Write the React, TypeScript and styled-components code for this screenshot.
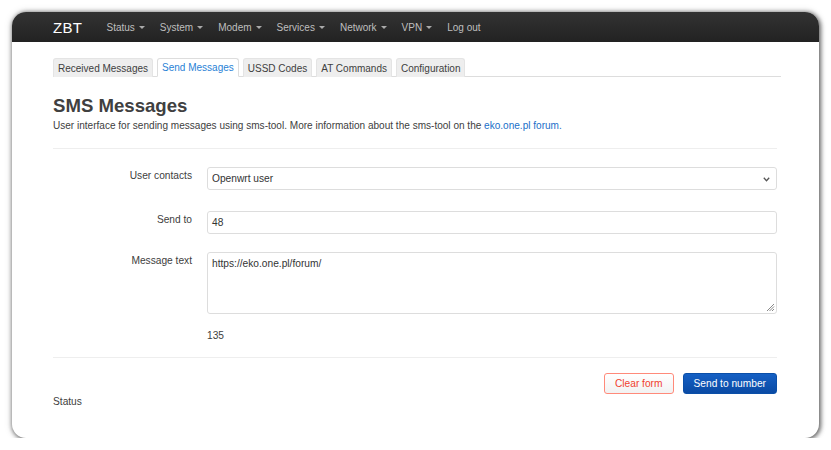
import React from "react";
import styled, { createGlobalStyle } from "styled-components";

const Global = createGlobalStyle`
  html, body { margin: 0; padding: 0; background: #fff; }
  body { font-family: "Liberation Sans", Arial, sans-serif; font-size: 10px; color: #404040; }
  * { box-sizing: border-box; }
`;

const Win = styled.div`
  margin: 12px 0 0 12px;
  width: 807px;
  height: 426px;
  border-radius: 14px;
  overflow: hidden;
  background: #fff;
  box-shadow: 1px 1px 4px 1px rgba(0, 0, 0, 0.55), 0 0 8px rgba(0, 0, 0, 0.15);
`;

const NavBar = styled.div`
  height: 30px;
  background: linear-gradient(#333, #222);
  display: flex;
  align-items: center;
  padding-left: 41px;
`;

const Brand = styled.div`
  color: #fff;
  font-size: 15px;
  width: 46px;
  letter-spacing: 0.3px;
`;

const NavItem = styled.div`
  color: #bfbfbf;
  font-size: 10px;
  padding: 0 7.5px;
  display: flex;
  align-items: center;
  gap: 3px;
`;

const Caret = styled.span`
  display: inline-block;
  width: 0;
  height: 0;
  border-left: 3px solid transparent;
  border-right: 3px solid transparent;
  border-top: 3px solid #aaa;
  margin-left: 1px;
  margin-top: 1px;
`;

const Main = styled.div`
  padding: 16px 42px 0 41px;
`;

const Tabs = styled.div`
  display: flex;
  gap: 3px;
  border-bottom: 1px solid #ddd;
  height: 19px;
  margin-right: -4px;
`;

const Tab = styled.div<{ $active?: boolean }>`
  height: 19px;
  padding: 0 4px;
  display: flex;
  align-items: center;
  font-size: 10px;
  border: 1px solid ${(p) => (p.$active ? "#ddd" : "#e4e4e4")};
  border-bottom: ${(p) => (p.$active ? "1px solid #fff" : "none")};
  border-radius: 3px 3px 0 0;
  background: ${(p) => (p.$active ? "#fff" : "#eee")};
  color: ${(p) => (p.$active ? "#2a82d6" : "#404040")};
  margin-right: 1px;
`;

const Title = styled.h2`
  margin: 18px 0 0 0;
  font-size: 18.6px;
  font-weight: 700;
  color: #404040;
  line-height: 22px;
`;

const Desc = styled.p`
  margin: 2px 0 0 0;
  font-size: 10.05px;
  line-height: 14px;
  color: #404040;
`;

const Link = styled.a`
  color: #1a6fc9;
  text-decoration: none;
`;

const Rule = styled.hr<{ $top?: number }>`
  border: none;
  border-top: 1px solid #eee;
  margin: ${(p) => p.$top ?? 0}px 0 0 0;
`;

const Form = styled.div`
  padding-top: 18px;
  display: flex;
  flex-direction: column;
`;

const Row = styled.div<{ $gap?: number }>`
  display: grid;
  grid-template-columns: 139px 1fr;
  column-gap: 15px;
  margin-bottom: ${(p) => p.$gap ?? 21}px;
`;

const Label = styled.div`
  text-align: right;
  padding-top: 3px;
  font-size: 10.2px;
  color: #404040;
`;

const Field = styled.div`
  height: 23px;
  border: 1px solid #ddd;
  border-radius: 3px;
  display: flex;
  align-items: center;
  padding: 0 4px;
  font-size: 10.2px;
  color: #333;
  position: relative;
  background: #fff;
`;

const Area = styled.div`
  height: 62px;
  border: 1px solid #ddd;
  border-radius: 3px;
  padding: 5px 4px;
  font-size: 10.2px;
  color: #333;
  position: relative;
`;

const Grip = styled.svg`
  position: absolute;
  right: 1px;
  bottom: 1px;
`;

const Chevron = styled.svg`
  position: absolute;
  right: 6px;
  top: 9px;
`;

const Counter = styled.div`
  grid-column: 2;
  font-size: 10.2px;
  color: #404040;
  padding-top: 3px;
`;

const Actions = styled.div`
  display: flex;
  justify-content: flex-end;
  gap: 9px;
  padding-top: 15px;
`;

const Btn = styled.div<{ $primary?: boolean }>`
  height: 21px;
  padding: 0 10px;
  display: flex;
  align-items: center;
  font-size: 10.2px;
  border-radius: 3px;
  border: 1px solid ${(p) => (p.$primary ? "#0b4fa8" : "#ff8a7a")};
  background: ${(p) =>
    p.$primary ? "linear-gradient(#1560c4, #0a4aa4)" : "linear-gradient(#fff, #f2f2f2)"};
  color: ${(p) => (p.$primary ? "#fff" : "#f0422e")};
`;

const Status = styled.div`
  margin-top: 2px;
  font-size: 10.2px;
  color: #404040;
`;

export default function App() {
  const nav = ["Status", "System", "Modem", "Services", "Network", "VPN"];
  const tabs = ["Received Messages", "Send Messages", "USSD Codes", "AT Commands", "Configuration"];
  return (
    <>
      <Global />
      <Win>
        <NavBar>
          <Brand>ZBT</Brand>
          {nav.map((n) => (
            <NavItem key={n}>
              {n}
              <Caret />
            </NavItem>
          ))}
          <NavItem>Log out</NavItem>
        </NavBar>
        <Main>
          <Tabs>
            {tabs.map((t) => (
              <Tab key={t} $active={t === "Send Messages"}>
                {t}
              </Tab>
            ))}
          </Tabs>
          <Title>SMS Messages</Title>
          <Desc>
            User interface for sending messages using sms-tool. More information about the sms-tool on the{" "}
            <Link>eko.one.pl forum.</Link>
          </Desc>
          <Rule $top={15} />
          <Form>
            <Row>
              <Label>User contacts</Label>
              <Field>
                Openwrt user
                <Chevron width="7" height="5" viewBox="0 0 7 5">
                  <path d="M0.8 0.8 L3.5 3.7 L6.2 0.8" fill="none" stroke="#555" strokeWidth="1.3" />
                </Chevron>
              </Field>
            </Row>
            <Row $gap={18}>
              <Label>Send to</Label>
              <Field>48</Field>
            </Row>
            <Row $gap={13}>
              <Label>Message text</Label>
              <Area>
                https://eko.one.pl/forum/
                <Grip width="10" height="10" viewBox="0 0 10 10">
                  <path d="M9 2 L2 9 M9 4.5 L4.5 9 M9 7 L7 9" stroke="#888" strokeWidth="1" />
                </Grip>
              </Area>
            </Row>
            <Row $gap={16}>
              <Counter>135</Counter>
            </Row>
          </Form>
          <Rule />
          <Actions>
            <Btn>Clear form</Btn>
            <Btn $primary>Send to number</Btn>
          </Actions>
          <Status>Status</Status>
        </Main>
      </Win>
    </>
  );
}
